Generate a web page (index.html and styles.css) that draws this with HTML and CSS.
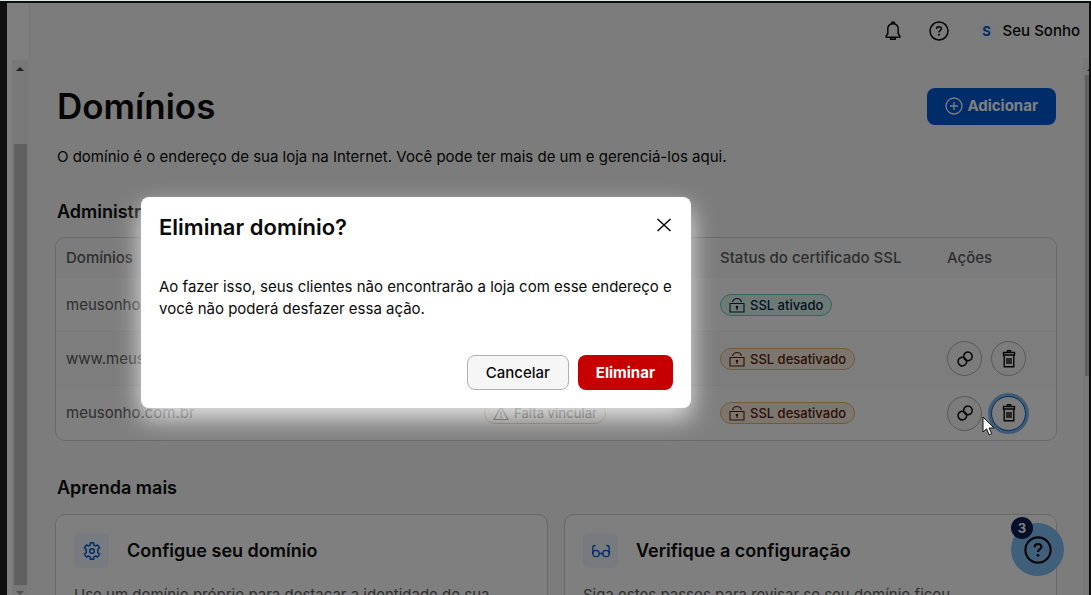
FILE: index.html
```html
<!DOCTYPE html>
<html lang="pt-BR">
<head>
<meta charset="utf-8">
<title>Domínios</title>
<link rel="stylesheet" href="styles.css">
</head>
<body>
<svg class="defs" aria-hidden="true">
  <symbol id="lock" viewBox="0 0 16 16"><path d="M1 6.500h14v8.500H1zM3.500 5C4 3 5.800 1.500 8 1.500S12 3 12.500 5" fill="none" stroke="currentColor" stroke-width="1.100"/><circle cx="8" cy="10" r="1.300" fill="currentColor"/><path d="M8 10v3" stroke="currentColor" stroke-width="1.100"/></symbol>
  <symbol id="link" viewBox="0 0 18 18"><g fill="none" stroke="currentColor" stroke-width="1.500" stroke-linecap="round"><path d="M11 10.600A4.300 4.300 0 1 0 7.700 7.200c.2 1.200.7 2.100 1.700 2.800"/><path d="M7.200 7.400A4.300 4.300 0 1 0 10.600 10.900c-.2-1.200-.7-2.100-1.700-2.800"/></g></symbol>
  <symbol id="trash" viewBox="0 0 16 18"><path d="M2.500 2.500h11v2.500h-11zM3.200 5v11.800h9.600V5M6 8v6M8 8v6M10 8v6" fill="none" stroke="currentColor" stroke-width="1.400"/><path d="M6.500 2.200V.8h3v1.400" fill="none" stroke="currentColor" stroke-width="1.400"/></symbol>
  <symbol id="help" viewBox="0 0 20 20"><g fill="none" stroke="currentColor" stroke-width="1.500"><circle cx="10" cy="10" r="9"/><path d="M7.600 8c0-1.500 1-2.300 2.400-2.300s2.400.8 2.400 2.100c0 1.600-2.400 1.700-2.400 3.700"/></g><circle cx="10" cy="13.800" r="1" fill="currentColor"/></symbol>
</svg>
<div class="window">
  <aside class="sidebar"><div class="track"><span class="arrow up"></span><span class="thumb"></span><span class="arrow down"></span></div></aside>
  <div class="page">
    <header class="topbar">
      <button class="plain" aria-label="Notificações"><svg width="16" height="20" viewBox="0 0 16 20" fill="none" stroke="currentColor" stroke-width="1.500" stroke-linejoin="round"><path d="M1.200 16.200h13.600v-1.400l-1.600-2V7.500C13.200 4.700 11 2.800 8 2.800S2.800 4.700 2.800 7.500v5.300l-1.600 2zM6.700 2.800V1.200h2.600v1.600M5.700 16.500v1.700h4.600v-1.700"/></svg></button>
      <button class="plain" aria-label="Ajuda"><svg width="20" height="20"><use href="#help"/></svg></button>
      <button class="plain account"><span class="initial">S</span>Seu Sonho</button>
    </header>
    <div class="scroller">
      <main class="content">
        <div class="heading">
          <h1>Domínios</h1>
          <button class="add"><svg width="18" height="18" viewBox="0 0 18 18" fill="none" stroke="currentColor" stroke-width="1.300"><circle cx="9" cy="9" r="8"/><path d="M9 5v8M5 9h8"/></svg>Adicionar</button>
        </div>
        <p class="intro">O domínio é o endereço de sua loja na Internet. Você pode ter mais de um e gerenciá-los aqui.</p>
        <h2>Administre</h2>
        <div class="panel">
          <table>
            <thead><tr><th class="c1">Domínios</th><th class="c2"></th><th class="c3">Status do certificado SSL</th><th>Ações</th></tr></thead>
            <tbody>
              <tr><td>meusonho</td><td></td><td><span class="pill ok"><svg width="16" height="16"><use href="#lock"/></svg>SSL ativado</span></td><td></td></tr>
              <tr><td>www.meus</td><td></td><td><span class="pill warn"><svg width="16" height="16"><use href="#lock"/></svg>SSL desativado</span></td><td><div class="actions"><button class="round" aria-label="Vincular"><svg width="18" height="18"><use href="#link"/></svg></button><button class="round" aria-label="Eliminar"><svg width="16" height="18"><use href="#trash"/></svg></button></div></td></tr>
              <tr><td>meusonho.com.br</td><td><span class="pill pending"><svg width="16" height="16" viewBox="0 0 16 16" fill="none" stroke="currentColor" stroke-width="1.200"><path d="M8 2l7 12.500H1zM8 6.500v4M8 11.500v1.500"/></svg>Falta vincular</span></td><td><span class="pill warn"><svg width="16" height="16"><use href="#lock"/></svg>SSL desativado</span></td><td><div class="actions"><button class="round" aria-label="Vincular"><svg width="18" height="18"><use href="#link"/></svg></button><button class="round focused" aria-label="Eliminar"><svg width="16" height="18"><use href="#trash"/></svg></button></div></td></tr>
            </tbody>
          </table>
        </div>
        <h2>Aprenda mais</h2>
        <div class="cards">
          <article class="card">
            <div class="card-head"><span class="tile"><svg width="20" height="20" viewBox="0 0 18 18" fill="none" stroke="currentColor" stroke-width="1.300" stroke-linejoin="round"><path d="M7.500 1.500h3v2l1.700 1 1.800-1 1.900 2.800-1.700 1.200v3l1.700 1.200-1.900 2.800-1.800-1-1.700 1v2h-3v-2l-1.700-1-1.800 1-1.900-2.800 1.700-1.200v-3L2.100 6.300 4 3.500l1.800 1 1.700-1z"/><circle cx="9" cy="9" r="2.100"/></svg></span><h3>Configue seu domínio</h3></div>
            <p>Use um domínio próprio para destacar a identidade de sua</p>
          </article>
          <article class="card">
            <div class="card-head"><span class="tile"><svg width="18" height="18" viewBox="0 0 18 18" fill="none" stroke="currentColor" stroke-width="1.300" stroke-linecap="round"><circle cx="4" cy="11.500" r="3.200"/><circle cx="14" cy="11.500" r="3.200"/><path d="M7.200 11.500h3.600M.8 11.500V6c0-1.500.7-2.500 2.200-2.500M17.200 11.500V6c0-1.500-.7-2.500-2.200-2.500"/></svg></span><h3>Verifique a configuração</h3></div>
            <p>Siga estes passos para revisar se seu domínio ficou</p>
          </article>
        </div>
      </main>
      <div class="page-track"><span class="arrow up"></span><span class="page-thumb"></span></div>
    </div>
  </div>
  <button class="chat" aria-label="Ajuda, 3 mensagens"><svg width="28" height="28"><use href="#help"/></svg><span class="count">3</span></button>
  <div class="overlay"></div>
  <section class="modal" role="dialog" aria-modal="true" aria-labelledby="modal-title">
    <div class="modal-head"><h2 id="modal-title">Eliminar domínio?</h2><button class="plain close" aria-label="Fechar"><svg width="16" height="16" viewBox="0 0 16 16" stroke="currentColor" stroke-width="1.500"><path d="M1.500 2l13 12M14.500 2l-13 12"/></svg></button></div>
    <p>Ao fazer isso, seus clientes não encontrarão a loja com esse endereço e você não poderá desfazer essa ação.</p>
    <div class="modal-actions"><button class="cancel">Cancelar</button><button class="delete">Eliminar</button></div>
  </section>
  <svg class="cursor" width="14" height="20" viewBox="0 0 14 20" aria-hidden="true"><path d="M1 1v15l3.500-3.200 2.700 6 2.500-1.200-2.600-5.600H12z" fill="#fff" stroke="#111"/></svg>
</div>
</body>
</html>
```
FILE: styles.css
```css
* { box-sizing: border-box; }
body {
  margin: 0;
  height: 100vh;
  overflow: hidden;
  border-top: 1px solid #dfe7e3;
  background: #0e0f0e;
  color: #0a0a0a;
  font-family: Inter, "Liberation Sans", sans-serif;
  font-size: 15px;
  line-height: 22px;
}
button { font: inherit; color: inherit; cursor: pointer; }
h1, h2, h3, p { margin: 0; }
svg { display: block; flex: none; }
.defs { position: absolute; width: 0; height: 0; }
.window {
  position: relative;
  display: flex;
  height: calc(100vh - 3px);
  margin: 2px 2px 0 7px;
  overflow: hidden;
  background: #f9f9f9;
}
.sidebar {
  flex: none;
  width: 23px;
  padding: 57px 1px 0 5px;
  background: #fff;
  border-right: 1px solid #ececec;
}
.track {
  display: flex;
  flex-direction: column;
  align-items: center;
  height: 100%;
  padding-top: 7px;
  background: #f1f1f1;
}
.arrow { flex: none; width: 0; border: 4px solid transparent; }
.arrow.up { border-top: 0; border-bottom-color: #503c3c; }
.arrow.down { margin-top: 6px; border-bottom: 0; border-top-color: #a0a0a0; }
.thumb { flex: 1; width: 13px; margin-top: 73px; background: #c1c1c1; }
.page { flex: 1; min-width: 0; display: flex; flex-direction: column; }
.topbar {
  display: flex;
  flex: none;
  align-items: center;
  justify-content: flex-end;
  gap: 28px;
  height: 55px;
  padding-right: 9px;
}
.plain { display: flex; align-items: center; padding: 0; border: 0; background: none; }
.account { gap: 6px; font-weight: 500; }
.initial {
  width: 20px;
  border-radius: 10px;
  background: #f3f8ff;
  color: #0059d5;
  font-size: 13px;
  line-height: 20px;
  font-weight: 700;
}
.scroller { display: flex; flex: 1; min-height: 0; }
.content { flex: 1; min-width: 0; padding: 26px 26px 0 25px; overflow: hidden; }
.heading { display: flex; align-items: center; justify-content: space-between; height: 44px; padding: 0 1px 0 2px; }
h1 { font-size: 35px; line-height: 42px; font-weight: 600; }
.add {
  display: flex;
  align-items: center;
  gap: 4px;
  height: 37px;
  padding: 0 18px;
  border: 0;
  border-radius: 8px;
  background: #0059d5;
  color: #fff;
  font-weight: 700;
}
.intro { margin: 18px 2px 0; }
.content h2 { margin: 32px 2px 13px; font-size: 18px; line-height: 24px; font-weight: 600; }
.panel { overflow: hidden; border: 1px solid #d0d0d0; border-radius: 10px; background: #fff; }
table { width: 100%; border-spacing: 0; table-layout: fixed; color: #5d5d5d; }
th { height: 40px; padding: 0 10px; background: #f8f8f8; text-align: left; font-weight: 500; }
td { height: 54px; padding: 0 10px; border-bottom: 1px solid #f3f3f3; }
tbody tr:nth-child(2) { background: #fafafa; }
tbody tr:last-child td { border-bottom: 0; }
.c1 { width: 41.8%; }
.c2 { width: 23.6%; }
.c3 { width: 22.7%; }
.pill {
  display: inline-flex;
  align-items: center;
  gap: 5px;
  height: 22px;
  padding: 0 8px;
  border: 1px solid;
  border-radius: 11px;
  font-size: 13px;
  font-weight: 500;
  vertical-align: middle;
}
.pill.ok { border-color: #6fc7cc; background: #dcf4ed; color: #0b1c40; }
.pill.warn { border-color: #e5b575; background: #f9eddd; color: #58200e; }
.pill.pending { border-color: #e5b08a; color: #5d5552; }
.actions { display: flex; gap: 9px; }
.round {
  display: flex;
  align-items: center;
  justify-content: center;
  width: 35px;
  height: 35px;
  padding: 0;
  border: 1px solid #b0b0b0;
  border-radius: 50%;
  background: #f9f9f9;
  color: #0a0a0a;
}
.round.focused { border-color: #0059d5; box-shadow: 0 0 0 3px #80b9ea; }
.content .panel + h2 { margin: 35px 2px 14px; }
.cards { display: grid; grid-template-columns: 1fr 1fr; gap: 16px; }
.card { padding: 18px; border: 1px solid #d0d0d0; border-radius: 10px; background: #fff; }
.card-head { display: flex; align-items: center; gap: 18px; }
.tile { display: flex; align-items: center; justify-content: center; width: 35px; height: 35px; border-radius: 6px; background: #eef5ff; color: #0059d5; }
.card h3 { font-size: 18px; line-height: 24px; font-weight: 600; }
.card p { margin-top: 16px; color: #5d5d5d; }
.page-track { flex: none; width: 6px; padding: 9px 0 0 2px; overflow: hidden; background: #f1f1f1; }
.page-track .arrow { display: block; margin-left: 2px; }
.page-thumb { display: block; height: 57%; margin-top: 4px; background: #c1c1c1; }
.chat {
  position: absolute;
  right: 25px;
  bottom: 19px;
  display: flex;
  align-items: center;
  justify-content: center;
  width: 53px;
  height: 53px;
  padding: 0;
  border: 0;
  border-radius: 50%;
  background: #80bff5;
}
.count {
  position: absolute;
  top: -6px;
  left: 0;
  width: 22px;
  border-radius: 11px;
  background: #0c1f55;
  color: #fff;
  font-size: 13px;
  font-weight: 700;
}
.overlay { position: absolute; inset: 0; background: rgba(0, 0, 0, 0.5); }
.modal {
  position: absolute;
  top: 194px;
  left: 134px;
  width: 550px;
  padding: 18px;
  border-radius: 8px;
  background: #fff;
  box-shadow: 0 10px 24px rgba(255, 255, 255, 0.8);
}
.modal-head { display: flex; align-items: center; justify-content: space-between; height: 24px; padding-right: 1px; }
.modal h2 { font-size: 22px; line-height: 24px; font-weight: 600; }
.close { align-self: flex-start; padding-top: 2px; }
.modal p { margin: 37px 0 35px; }
.modal-actions { display: flex; justify-content: flex-end; gap: 9px; }
.cancel, .delete { height: 35px; padding: 0 18px; border-radius: 8px; }
.cancel { border: 1px solid #b0b0b0; background: #f6f6f6; font-weight: 500; }
.delete { border: 0; background: #c60000; color: #fff; font-weight: 700; }
.cursor { position: absolute; top: 413px; left: 975px; }
```
